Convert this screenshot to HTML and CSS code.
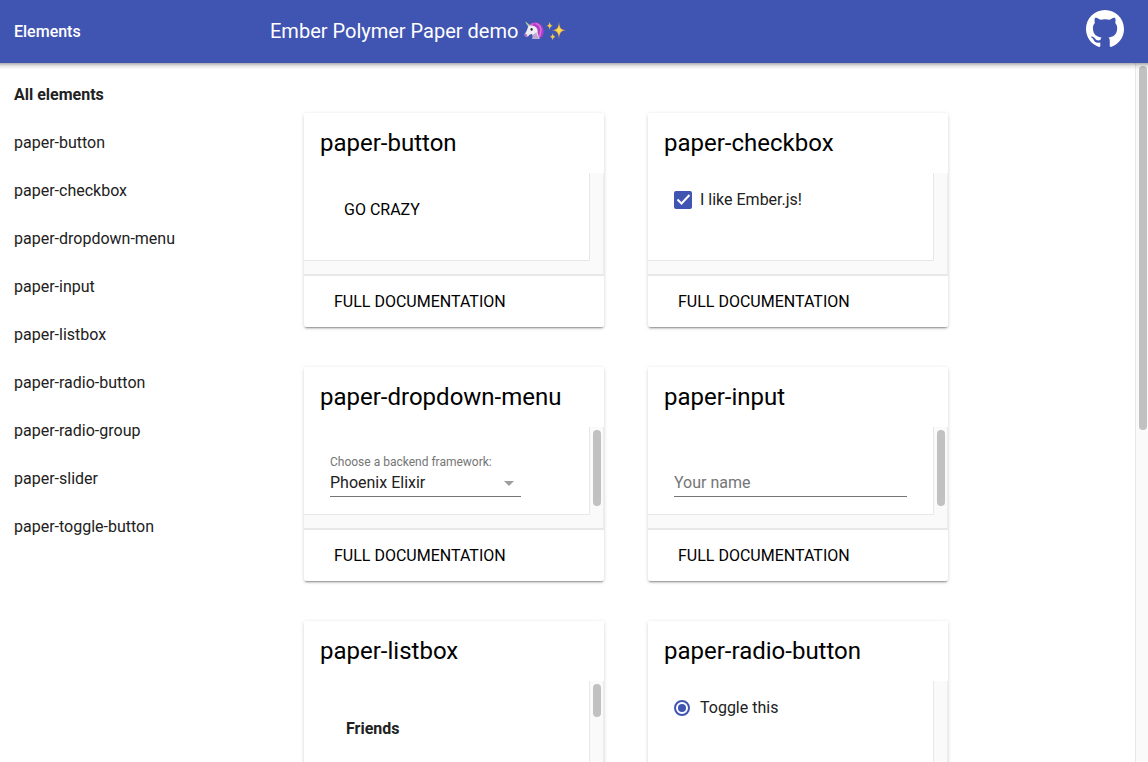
FILE: index.html
```html
<!DOCTYPE html>
<html lang="en">
<head>
<meta charset="utf-8">
<meta name="viewport" content="width=device-width, initial-scale=1">
<title>Ember Polymer Paper demo</title>
<link rel="stylesheet" href="styles.css">
</head>
<body>
<header class="app-header">
  <div class="drawer-title">Elements</div>
  <h1 class="app-title">Ember Polymer Paper demo
    <svg class="emoji" viewBox="0 0 20 20" role="img" aria-label="unicorn">
      <path d="M6.500 4.800 1 .2l3.400 6z" fill="#7fd8c4"/>
      <path d="M2.200 1.200l1 1.200-.5.8M4 2.800l1 1.100-.9 1" stroke="#e8c95c" stroke-width=".8" fill="none"/>
      <path d="M6 3.800C8 1.200 12 .4 15 2.200c3.200 2 4.700 5 4.600 8.200 0 3-.8 4.600-2.300 6.100l-5.300.3-2-9z" fill="#b13fc6"/>
      <path d="M11.500 2.400c4 1.200 6 4.200 5.200 8-.6 2.600-.3 4-1.700 5.600" stroke="#dd74e0" stroke-width="1.400" fill="none"/>
      <path d="M4.500 5.300 8.300 2.700l.7 2c3 .8 4.700 3 4.600 5.300-.1 2.500.6 4.500 2.200 7.700H8.200c.9-1.800.8-3.300-.4-4.700-1.400 0-2.400.7-3.300 1.900-.7.900-2.300 1-3.300.1-.9-.8-.8-1.900 0-2.800C3 10.300 3.200 7.300 4.500 5.300z" fill="#efedf2"/>
      <path d="M8.800 13.400c1.700-.4 2.900-1.400 3.500-2.700.4 2.700 1.600 4.500 3.200 7H8.200c.8-1.500 1-2.800.6-4.300z" fill="#c3a5d6"/>
      <path d="M5.600 4.300C6.600 2.200 9 1.300 11 2.300c-1.500.5-2 1.400-2.400 2.800z" fill="#d25bd2"/>
      <ellipse cx="7.600" cy="8.400" rx="1.100" ry="1.400" fill="#2d2637"/>
      <path d="M1 12.400c1 .2 2 .9 2.500 2.800-1 .5-2 .3-2.600-.3-.7-.8-.6-1.700.1-2.500z" fill="#b56abf"/>
    </svg><svg class="emoji" viewBox="0 0 20 20" role="img" aria-label="sparkles">
      <path d="M13 .5c.4 6.200 1.500 8 7 8.800-5.500.8-6.600 2.800-7 9-.4-6.200-1.500-8.200-7-9 5.500-.8 6.600-2.600 7-8.800z" fill="#f3b64a"/>
      <path d="M13 4c.4 3.600 1.200 4.800 4 5.300-2.800.5-3.600 1.700-4 5.300-.4-3.600-1.200-4.800-4-5.300 2.800-.5 3.600-1.700 4-5.300z" fill="#ffe14d"/>
      <path d="M3.700.7c.3 2.500 1 3.500 3 4-2 .5-2.700 1.500-3 4-.3-2.500-1-3.500-3-4 2-.5 2.700-1.500 3-4z" fill="#f6c84c"/>
      <path d="M6.700 12c.3 2.300.9 3.200 2.800 3.700-1.900.5-2.500 1.400-2.800 3.700-.3-2.300-.9-3.200-2.800-3.700 1.900-.5 2.500-1.400 2.800-3.700z" fill="#f6c84c"/>
    </svg>
  </h1>
  <a class="github" href="#github" aria-label="GitHub">
    <svg viewBox="0 0 16 16" aria-hidden="true"><path fill="#fff" fill-rule="evenodd" d="M8 0C3.580 0 0 3.580 0 8c0 3.540 2.290 6.530 5.470 7.590.4.070.55-.17.55-.38 0-.19-.01-.82-.01-1.490-2.010.37-2.530-.49-2.690-.94-.09-.23-.48-.94-.82-1.130-.28-.15-.68-.52-.01-.53.63-.01 1.080.58 1.230.82.72 1.210 1.870.87 2.330.66.07-.52.28-.87.51-1.070-1.780-.2-3.640-.89-3.640-3.950 0-.87.31-1.590.82-2.150-.08-.2-.36-1.020.08-2.120 0 0 .67-.21 2.200.82.64-.18 1.320-.27 2-.27s1.360.09 2 .27c1.530-1.040 2.200-.82 2.200-.82.44 1.100.16 1.920.08 2.120.51.56.82 1.270.82 2.150 0 3.070-1.870 3.750-3.650 3.950.29.25.54.73.54 1.480 0 1.070-.01 1.930-.01 2.200 0 .21.15.46.55.38A8.010 8.010 0 0 0 16 8c0-4.420-3.580-8-8-8z"/></svg>
  </a>
</header>

<div class="app-body">
  <nav class="drawer" aria-label="Elements">
    <a class="nav-item selected" href="#all">All elements</a>
    <a class="nav-item" href="#button">paper-button</a>
    <a class="nav-item" href="#checkbox">paper-checkbox</a>
    <a class="nav-item" href="#dropdown-menu">paper-dropdown-menu</a>
    <a class="nav-item" href="#input">paper-input</a>
    <a class="nav-item" href="#listbox">paper-listbox</a>
    <a class="nav-item" href="#radio-button">paper-radio-button</a>
    <a class="nav-item" href="#radio-group">paper-radio-group</a>
    <a class="nav-item" href="#slider">paper-slider</a>
    <a class="nav-item" href="#toggle-button">paper-toggle-button</a>
  </nav>

  <main class="content">
    <div class="cards">
      <section class="card">
        <h2 class="card-title">paper-button</h2>
        <div class="scroller">
          <div class="pane"><button class="paper-button demo" type="button">GO CRAZY</button></div>
          <div class="track"></div>
        </div>
        <div class="card-actions"><button class="paper-button" type="button">FULL DOCUMENTATION</button></div>
      </section>

      <section class="card">
        <h2 class="card-title">paper-checkbox</h2>
        <div class="scroller">
          <div class="pane"><label class="choice"><input class="checkbox" type="checkbox" checked><span>I like Ember.js!</span></label></div>
          <div class="track"></div>
        </div>
        <div class="card-actions"><button class="paper-button" type="button">FULL DOCUMENTATION</button></div>
      </section>

      <section class="card">
        <h2 class="card-title">paper-dropdown-menu</h2>
        <div class="scroller">
          <div class="pane">
            <div class="field dropdown">
              <label class="field-label" for="framework">Choose a backend framework:</label>
              <select class="field-control" id="framework"><option>Phoenix Elixir</option></select>
            </div>
          </div>
          <div class="track"><div class="thumb" style="height: 89%"></div></div>
        </div>
        <div class="card-actions"><button class="paper-button" type="button">FULL DOCUMENTATION</button></div>
      </section>

      <section class="card">
        <h2 class="card-title">paper-input</h2>
        <div class="scroller">
          <div class="pane">
            <div class="field">
              <label class="field-label" for="name" aria-label="Your name"></label>
              <input class="field-control" id="name" type="text" placeholder="Your name">
            </div>
          </div>
          <div class="track"><div class="thumb" style="height: 89%"></div></div>
        </div>
        <div class="card-actions"><button class="paper-button" type="button">FULL DOCUMENTATION</button></div>
      </section>

      <section class="card">
        <h2 class="card-title">paper-listbox</h2>
        <div class="scroller">
          <div class="pane"><div class="list-heading">Friends</div></div>
          <div class="track"><div class="thumb" style="height: 39%"></div></div>
        </div>
      </section>

      <section class="card">
        <h2 class="card-title">paper-radio-button</h2>
        <div class="scroller">
          <div class="pane"><label class="choice"><input class="radio" type="radio" name="toggle" checked><span>Toggle this</span></label></div>
          <div class="track"></div>
        </div>
      </section>
    </div>
  </main>

  <div class="page-track track"><div class="thumb" style="height: 52.3%"></div></div>
</div>
</body>
</html>
```
FILE: styles.css
```css
* {
  box-sizing: border-box;
}

body {
  margin: 0;
  height: 100vh;
  display: flex;
  flex-direction: column;
  overflow: hidden;
  background: #fff;
  color: #212121;
  font: 16px/24px Roboto, sans-serif;
  -webkit-font-smoothing: antialiased;
}

.app-header {
  flex: none;
  display: flex;
  align-items: center;
  height: 63px;
  background: #4054b2;
  color: #fff;
}

.drawer-title {
  width: 256px;
  padding-left: 14px;
  font-weight: 500;
}

.app-title {
  flex: 1;
  display: flex;
  align-items: center;
  margin: 0;
  padding: 0 0 2px 14px;
  font-size: 20px;
  font-weight: 400;
}

.emoji {
  width: 20px;
  height: 20px;
  margin-right: 2px;
}

.emoji:first-child {
  margin-left: 6px;
}

.github {
  display: flex;
  margin: 0 24px 5px 0;
}

.github svg {
  width: 38px;
  height: 38px;
}

.app-body {
  position: relative;
  flex: 1;
  min-height: 0;
  display: flex;
}

/* Shadow cast by the header over the drawer and the content */
.app-body::before {
  content: "";
  position: absolute;
  top: 0;
  left: 0;
  right: 0;
  height: 6px;
  background: linear-gradient(rgba(0, 0, 0, .32), rgba(0, 0, 0, .1) 50%, rgba(0, 0, 0, .02));
}

.drawer {
  flex: none;
  width: 256px;
  padding-top: 8px;
}

.nav-item {
  display: block;
  padding: 12px 14px;
  color: inherit;
  text-decoration: none;
}

.nav-item.selected {
  font-weight: 700;
}

.content {
  flex: 1;
  min-width: 0;
  overflow: hidden;
  padding: 50px 48px;
}

.cards {
  display: grid;
  grid-template-columns: repeat(auto-fill, 300px);
  gap: 40px 44px;
}

.card {
  border-radius: 2px;
  background: #fff;
  box-shadow: 0 1px 4px rgba(0, 0, 0, .14), 0 2px 2px -1px rgba(0, 0, 0, .4);
}

.card-title {
  margin: 0;
  padding: 14px 16px;
  color: #000;
  font-size: 24px;
  font-weight: 400;
  line-height: 32px;
}

.scroller {
  display: grid;
  grid-template-columns: 1fr 14px;
  grid-template-rows: 88px;
  padding-bottom: 13px;
  border-right: 1px solid #ededed;
  background: #fafafa;
}

.pane {
  overflow: hidden;
  padding: 0 26px;
  border-bottom: 1px solid #e8e8e8;
  background: #fff;
}

.track {
  padding: 3px 2px 0 3px;
  border-left: 1px solid #e8e8e8;
  background: #fafafa;
}

.thumb {
  width: 8px;
  border-radius: 4px;
  background: #c1c1c1;
}

.page-track {
  flex: none;
  width: 13px;
}

.card-actions {
  padding: 9px 16px 8px;
  border-top: 2px solid #e8e8e8;
}

.paper-button {
  border: 0;
  padding: 5px 14px;
  background: none;
  color: #000;
  font: inherit;
}

.demo {
  margin-top: 20px;
}

.choice {
  display: flex;
  align-items: center;
  padding-top: 15px;
}

.choice span {
  padding-left: 8px;
}

.checkbox,
.radio {
  flex: none;
  appearance: none;
  margin: 0;
}

.checkbox {
  width: 18px;
  height: 18px;
  border-radius: 2px;
  background: #4054b2 url("data:image/svg+xml,%3Csvg xmlns='http://www.w3.org/2000/svg' viewBox='0 0 18 18'%3E%3Cpath d='M3.500 8.500l4 4L15.500 4' fill='none' stroke='white' stroke-width='2'/%3E%3C/svg%3E");
}

.radio {
  width: 16px;
  height: 16px;
  margin-right: 2px;
  border: 2px solid #4054b2;
  border-radius: 50%;
  background: url("data:image/svg+xml,%3Csvg xmlns='http://www.w3.org/2000/svg' viewBox='0 0 12 12'%3E%3Ccircle cx='6' cy='6' r='4' fill='%234054b2'/%3E%3C/svg%3E") center / 12px 12px no-repeat;
}

.field {
  display: flex;
  flex-direction: column;
  padding-top: 24px;
}

.dropdown {
  width: 191px;
}

.field-label {
  height: 20px;
  color: #757575;
  font-size: 12px;
  line-height: 22px;
}

.field-control {
  appearance: none;
  width: 100%;
  height: 26px;
  margin: 0;
  padding: 0 0 2px;
  border: 0;
  border-bottom: 1px solid #757575;
  border-radius: 0;
  background: none;
  color: #212121;
  font: inherit;
}

.field-control::placeholder {
  color: #757575;
}

.dropdown .field-control {
  background: url("data:image/svg+xml,%3Csvg xmlns='http://www.w3.org/2000/svg' viewBox='0 0 10 5'%3E%3Cpath d='M0 0h10L5 5z' fill='%239e9e9e'/%3E%3C/svg%3E") no-repeat right 7px center / 10px 5px;
}

.list-heading {
  padding: 36px 16px 0;
  font-weight: 700;
}
```
